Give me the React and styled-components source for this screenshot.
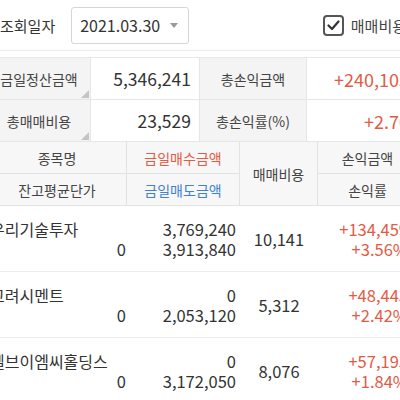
import React from "react";
import styled, { createGlobalStyle } from "styled-components";

const GlobalStyle = createGlobalStyle`
  html, body {
    margin: 0;
    padding: 0;
    background: #ffffff;
    overflow: hidden;
  }
  body {
    font-family: "Noto Sans CJK KR", "Noto Sans", sans-serif;
    color: #333;
  }
`;

const COLS = "139px 113px 78px 100px";
const RED = "#e35a45";
const BLUE = "#3f82d2";

const Page = styled.div`
  width: 430px;
  margin-left: -12px;
`;

const TopBar = styled.div`
  display: flex;
  align-items: center;
  height: 50px;
  padding: 0 12px;
  border-bottom: 1px solid #ececec;
  margin-bottom: 6px;
`;

const TopLabel = styled.span`
  font-size: 15px;
  color: #333;
`;

const DateSelect = styled.div`
  margin-left: 16px;
  width: 118px;
  height: 37px;
  box-sizing: border-box;
  border: 1px solid #d6d6d6;
  border-radius: 3px;
  display: flex;
  align-items: center;
  justify-content: space-between;
  padding: 0 10px 0 8px;
  font-size: 16px;
  color: #333;
`;

const Caret = styled.span`
  width: 0;
  height: 0;
  border-left: 4.5px solid transparent;
  border-right: 4.5px solid transparent;
  border-top: 5px solid #9a9a9a;
`;

const CheckWrap = styled.label`
  margin-left: auto;
  display: flex;
  align-items: center;
  gap: 7px;
  font-size: 15px;
  color: #444;
`;

const CheckBox = styled.span`
  width: 21px;
  height: 21px;
  box-sizing: border-box;
  border: 2px solid #555;
  border-radius: 4px;
  display: flex;
  align-items: center;
  justify-content: center;
`;

const Summary = styled.div`
  display: grid;
  grid-template-columns: 103px 109px 107px 111px;
  grid-auto-rows: 42px;
  border-top: 1px solid #e8e8e8;
`;

const SumLabel = styled.div`
  position: relative;
  background: #f4f4f4;
  display: flex;
  align-items: center;
  justify-content: center;
  font-size: 14px;
  color: #444;
  border-bottom: 1px solid #e6e6e6;
  border-right: 1px solid #e6e6e6;

  ${(p) =>
    p.$corner &&
    `
    &::after {
      content: "";
      position: absolute;
      right: 1px;
      bottom: 1px;
      width: 0;
      height: 0;
      border-left: 8px solid transparent;
      border-bottom: 8px solid #c4c4c4;
    }
  `}
`;

const SumValue = styled.div`
  display: flex;
  align-items: center;
  justify-content: flex-end;
  padding-right: 8px;
  font-size: ${(p) => (p.$red ? 18 : 17.5)}px;
  white-space: nowrap;
  color: ${(p) => (p.$red ? RED : "#333")};
  border-bottom: 1px solid #e6e6e6;
  border-right: 1px solid #e6e6e6;
`;

const Header = styled.div`
  display: grid;
  grid-template-columns: ${COLS};
  grid-template-rows: 32px 32px;
  background: #f7f7f7;
`;

const HeadCell = styled.div`
  display: flex;
  align-items: center;
  justify-content: center;
  font-size: 14px;
  white-space: nowrap;
  color: ${(p) => p.$color || "#444"};
  border-right: 1px solid #e2e2e2;
  border-bottom: 1px solid #e2e2e2;
  grid-column: ${(p) => p.$col};
  grid-row: ${(p) => (p.$span ? "1 / span 2" : p.$row)};
`;

const Row = styled.div`
  display: grid;
  grid-template-columns: ${COLS};
  height: 65px;
  border-bottom: 1px solid #ececec;
  font-size: 16.5px;
  line-height: 20px;
`;

const Cell = styled.div`
  display: flex;
  flex-direction: column;
  justify-content: center;
  align-items: ${(p) => p.$align || "flex-end"};
  padding-right: ${(p) => p.$pr || 0}px;
  color: ${(p) => (p.$red ? RED : "#333")};
  white-space: nowrap;
`;

const Name = styled.span`
  align-self: flex-start;
  padding-left: 2px;
  font-size: 16px;
`;

const rows = [
  { name: "우리기술투자", avg: "0", buy: "3,769,240", sell: "3,913,840", fee: "10,141", pl: "+134,459", rate: "+3.56%" },
  { name: "고려시멘트", avg: "0", buy: "0", sell: "2,053,120", fee: "5,312", pl: "+48,443", rate: "+2.42%" },
  { name: "엘브이엠씨홀딩스", avg: "0", buy: "0", sell: "3,172,050", fee: "8,076", pl: "+57,193", rate: "+1.84%" },
];

export default function App() {
  return (
    <Page>
      <GlobalStyle />
      <TopBar>
        <TopLabel>조회일자</TopLabel>
        <DateSelect>
          <span>2021.03.30</span>
          <Caret />
        </DateSelect>
        <CheckWrap>
          <CheckBox>
            <svg width="13" height="11" viewBox="0 0 13 11">
              <path d="M1.5 5.5 L5 9 L11.5 1.5" fill="none" stroke="#333" strokeWidth="2.2" strokeLinecap="round" strokeLinejoin="round" />
            </svg>
          </CheckBox>
          매매비용
        </CheckWrap>
      </TopBar>

      <Summary>
        <SumLabel $corner>금일정산금액</SumLabel>
        <SumValue>5,346,241</SumValue>
        <SumLabel>총손익금액</SumLabel>
        <SumValue $red>+240,105</SumValue>
        <SumLabel $corner>총매매비용</SumLabel>
        <SumValue>23,529</SumValue>
        <SumLabel>총손익률(%)</SumLabel>
        <SumValue $red>+2.70</SumValue>
      </Summary>

      <Header>
        <HeadCell $col={1} $row={1}>종목명</HeadCell>
        <HeadCell $col={2} $row={1} $color={RED}>금일매수금액</HeadCell>
        <HeadCell $col={3} $span>매매비용</HeadCell>
        <HeadCell $col={4} $row={1}>손익금액</HeadCell>
        <HeadCell $col={1} $row={2}>잔고평균단가</HeadCell>
        <HeadCell $col={2} $row={2} $color={BLUE}>금일매도금액</HeadCell>
        <HeadCell $col={4} $row={2}>손익률</HeadCell>
      </Header>

      {rows.map((r) => (
        <Row key={r.name}>
          <Cell $pr={1}>
            <Name>{r.name}</Name>
            <span>{r.avg}</span>
          </Cell>
          <Cell $pr={4}>
            <span>{r.buy}</span>
            <span>{r.sell}</span>
          </Cell>
          <Cell $align="center">
            <span>{r.fee}</span>
          </Cell>
          <Cell $pr={10} $red>
            <span>{r.pl}</span>
            <span>{r.rate}</span>
          </Cell>
        </Row>
      ))}
    </Page>
  );
}
